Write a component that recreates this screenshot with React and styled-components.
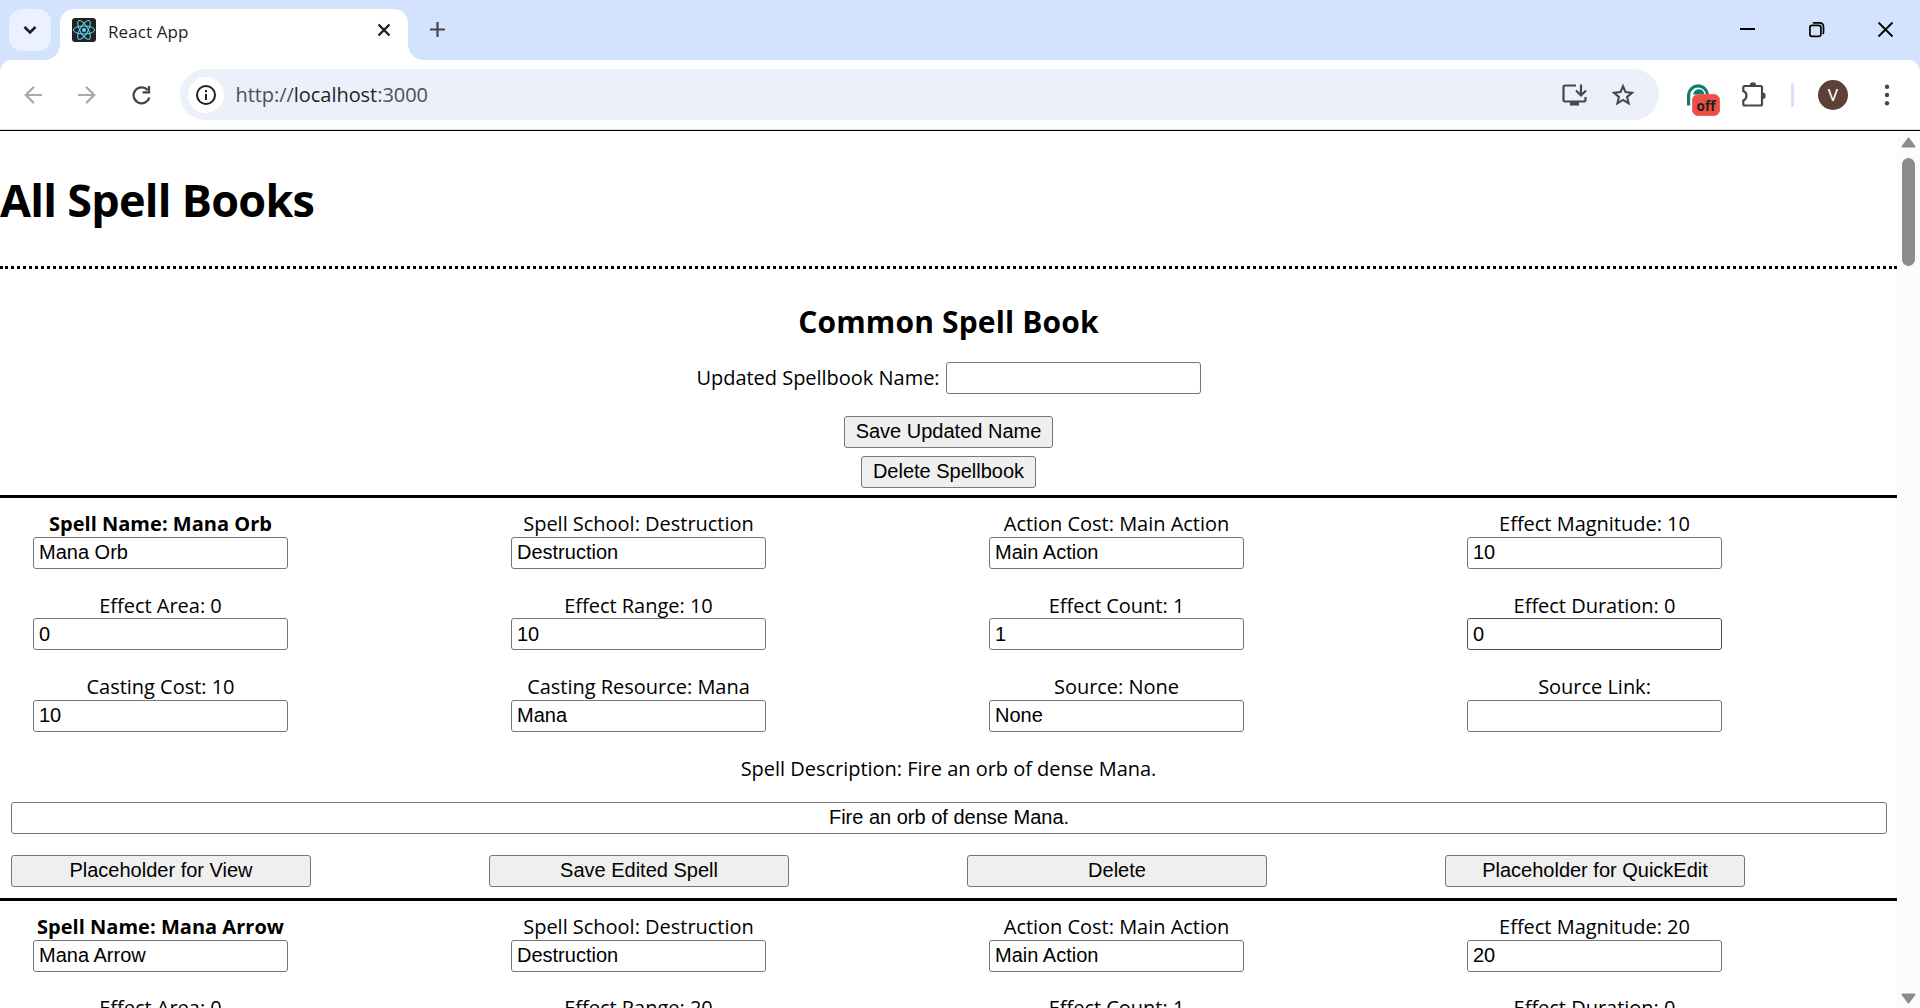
import React from "react";
import styled, { createGlobalStyle } from "styled-components";

const Global = createGlobalStyle`
  * { box-sizing: border-box; }
  html, body { margin: 0; padding: 0; overflow: hidden; background: #fff; }
  body { font-family: "Open Sans", "Noto Sans", sans-serif; color: #000; }
`;

const Window = styled.div`
  width: 1920px;
  height: 1008px;
  display: flex;
  flex-direction: column;
  overflow: hidden;
`;

const TabStrip = styled.div`
  height: 60px;
  flex: none;
  background: #d3e2fd;
  display: flex;
  align-items: flex-start;
`;

const TabSearch = styled.div`
  width: 42px;
  height: 42px;
  margin: 9px 9px 0 9px;
  border-radius: 13px;
  background: #ebf1fe;
  display: grid;
  place-items: center;
`;

const Tab = styled.div`
  position: relative;
  width: 348px;
  height: 51px;
  margin-top: 9px;
  padding: 0 17px 9px 12px;
  border-radius: 14px 14px 0 0;
  background: #fff;
  display: flex;
  align-items: center;
  &::before, &::after {
    content: "";
    position: absolute;
    bottom: 0;
    width: 15px;
    height: 15px;
  }
  &::before {
    left: -15px;
    background: radial-gradient(circle at 0 0, rgba(255, 255, 255, 0) 14.5px, #fff 15px);
  }
  &::after {
    right: -15px;
    background: radial-gradient(circle at 100% 0, rgba(255, 255, 255, 0) 14.5px, #fff 15px);
  }
`;

const TabTitle = styled.span`
  flex: 1;
  margin-left: 12px;
  padding-top: 2px;
  font-size: 17px;
  letter-spacing: 0.1px;
  color: #1f1f1f;
`;

const NewTab = styled.div`
  margin: 21px 0 0 21px;
  line-height: 0;
`;

const WindowControls = styled.div`
  margin: 21px 26px 0 auto;
  display: flex;
  gap: 52px;
  line-height: 0;
`;

const ToolbarFrame = styled.div`
  height: 69px;
  flex: none;
  background: #d3e2fd;
`;

const Toolbar = styled.div`
  height: 69px;
  background: #fff;
  border-radius: 12px 12px 0 0;
  display: flex;
  align-items: center;
  padding: 0 21px 0 22px;
  svg { flex: none; display: block; }
`;

const NavButtons = styled.div`
  display: flex;
  gap: 30px;
  width: 158px;
`;

const AddressBar = styled.div`
  width: 1479px;
  height: 51px;
  border-radius: 26px;
  background: #ecf0fa;
  display: flex;
  align-items: center;
  padding: 0 24px 0 8px;
`;

const SiteInfo = styled.div`
  width: 36px;
  height: 36px;
  border-radius: 50%;
  background: #fff;
  display: grid;
  place-items: center;
`;

const Url = styled.span`
  flex: 1;
  margin-left: 11.5px;
  font-size: 20px;
  letter-spacing: -0.05px;
  color: #4c4f55;
  b { font-weight: 400; color: #1f1f1f; }
`;

const BarActions = styled.div`
  display: flex;
  gap: 24px;
`;

const Extension = styled.div`
  position: relative;
  margin-left: 28px;
  width: 34px;
  height: 24px;
`;

const ExtensionBadge = styled.span`
  position: absolute;
  left: 5px;
  top: 11px;
  width: 28px;
  height: 22px;
  border-radius: 6px;
  border: 1px solid #f6655a;
  background: #ec5044;
  color: #1f1f1f;
  font-size: 13.5px;
  font-weight: 700;
  line-height: 22px;
  text-align: center;
`;

const Puzzle = styled.div`
  margin-left: 20px;
`;

const ToolbarRule = styled.div`
  width: 3px;
  height: 24px;
  margin-left: 24px;
  border-radius: 2px;
  background: #d3e2fd;
`;

const Avatar = styled.div`
  width: 30px;
  height: 30px;
  margin: 0 36px 0 24px;
  border-radius: 50%;
  background: #5d4037;
  color: #fff;
  font: 400 17px/31px Roboto, sans-serif;
  text-align: center;
`;

const Viewport = styled.div`
  flex: 1;
  min-height: 0;
  display: flex;
  border-top: 1px solid #dcdcdc;
`;

const Page = styled.main`
  width: 1897px;
  border-top: 1px solid #000;
  overflow: hidden;
  text-align: center;
`;

const Scrollbar = styled.div`
  width: 23px;
  border-top: 1px solid #000;
  background: #fcfcfc;
  display: flex;
  flex-direction: column;
  align-items: center;
  padding: 6px 0 4px;
  svg { display: block; }
`;

const ScrollThumb = styled.div`
  width: 13px;
  height: 108px;
  margin: 10px 0 auto;
  border-radius: 7px;
  background: #8b8b8b;
`;

const PageTitle = styled.h1`
  height: 135px;
  margin: 0;
  padding-top: 34px;
  font-size: 45px;
  line-height: 70px;
  font-weight: 700;
  letter-spacing: -0.75px;
  text-align: left;
`;

const BookHeader = styled.header`
  height: 232.4px;
  border-top: 3px dotted #000;
  border-bottom: 3px solid #000;
  display: flex;
  flex-direction: column;
  align-items: center;
`;

const BookTitle = styled.h2`
  height: 93px;
  margin: 0;
  padding-top: 32px;
  font-size: 30px;
  line-height: 42px;
  font-weight: 700;
  letter-spacing: 0.15px;
`;

const Label = styled.span`
  height: 26.6px;
  font-size: 20px;
  line-height: 27px;
  white-space: nowrap;
  font-weight: ${(p) => (p.$bold ? 700 : 400)};
  letter-spacing: ${(p) => (p.$bold ? "0.02px" : "-0.02px")};
`;

const NameRow = styled.label`
  display: flex;
  align-items: center;
  gap: 6px;
  margin-bottom: 22px;
  ${Label} { margin-bottom: 2px; }
`;

const Input = styled.input`
  display: block;
  width: ${(p) => p.$width || "255px"};
  height: 32px;
  padding: 0 5px;
  border: 1px solid ${(p) => (p.$hovered ? "#4f4f4f" : "#767676")};
  border-radius: 3px;
  background: #fff;
  color: #000;
  font: 20px "Liberation Sans", Arial, sans-serif;
  text-align: ${(p) => p.$align || "left"};
  outline: none;
`;

const Button = styled.button`
  width: ${(p) => p.$width || "100%"};
  height: 32px;
  flex: none;
  margin: 0 0 ${(p) => p.$gap || "0"};
  padding: 0 0 ${(p) => (p.$width ? "2px" : "0")};
  border: 1px solid #767676;
  border-radius: 3px;
  background: #efefef;
  color: #000;
  font: 20px "Liberation Sans", Arial, sans-serif;
`;

const Spell = styled.section`
  height: 402.6px;
  border-bottom: 3px solid #000;
  padding: 12px 11px 0;
`;

const Columns = styled.div`
  display: grid;
  grid-template-columns: repeat(4, 300px);
  column-gap: 178px;
  grid-auto-rows: ${(p) => p.$row};
`;

const Field = styled.label`
  display: flex;
  flex-direction: column;
  align-items: center;
  padding-right: 1px;
`;

const Description = styled.p`
  margin: 0;
  height: 47px;
`;

const DescriptionBox = styled.div`
  margin: 0 -1px 21px 0;
`;

const fieldNames = [
  "Spell Name", "Spell School", "Action Cost", "Effect Magnitude",
  "Effect Area", "Effect Range", "Effect Count", "Effect Duration",
  "Casting Cost", "Casting Resource", "Source", "Source Link",
];

const spells = [
  {
    values: ["Mana Orb", "Destruction", "Main Action", "10", "0", "10", "1", "0", "10", "Mana", "None", ""],
    description: "Fire an orb of dense Mana.",
    hovered: 7,
  },
  {
    values: ["Mana Arrow", "Destruction", "Main Action", "20", "0", "20", "1", "0"],
    hovered: -1,
  },
];

const actions = ["Placeholder for View", "Save Edited Spell", "Delete", "Placeholder for QuickEdit"];

function SpellCard({ spell }) {
  return (
    <Spell>
      <Columns $row="81.5px">
        {spell.values.map((value, i) => (
          <Field key={fieldNames[i]}>
            <Label $bold={i === 0}>{fieldNames[i]}: {value}</Label>
            <Input defaultValue={value} $hovered={spell.hovered === i} />
          </Field>
        ))}
      </Columns>
      {spell.description && (
        <>
          <Description><Label>Spell Description: {spell.description}</Label></Description>
          <DescriptionBox>
            <Input $width="100%" $align="center" defaultValue={spell.description} />
          </DescriptionBox>
          <Columns $row="32px">
            {actions.map((a) => <Button key={a}>{a}</Button>)}
          </Columns>
        </>
      )}
    </Spell>
  );
}

const ReactLogo = () => (
  <svg width="24" height="24" viewBox="0 0 24 24">
    <rect width="24" height="24" rx="3" fill="#222" />
    <g fill="none" stroke="#61dafb" strokeWidth="1">
      <ellipse cx="12" cy="12" rx="10.6" ry="4" />
      <ellipse cx="12" cy="12" rx="10.6" ry="4" transform="rotate(60 12 12)" />
      <ellipse cx="12" cy="12" rx="10.6" ry="4" transform="rotate(120 12 12)" />
    </g>
    <circle cx="12" cy="12" r="2" fill="#61dafb" />
  </svg>
);

function BrowserTabs() {
  return (
    <TabStrip>
      <TabSearch>
        <svg width="14" height="10" viewBox="0 0 14 10" fill="none" stroke="#1f1f1f" strokeWidth="2.6"><path d="M1.5 2 7 7.5 12.5 2" /></svg>
      </TabSearch>
      <Tab>
        <ReactLogo />
        <TabTitle>React App</TabTitle>
        <svg width="14" height="14" viewBox="0 0 14 14" stroke="#1f1f1f" strokeWidth="2.4"><path d="M1.5 1.5 12.5 12.5M12.5 1.5 1.5 12.5" /></svg>
      </Tab>
      <NewTab>
        <svg width="17" height="17" viewBox="0 0 17 17" stroke="#474747" strokeWidth="2.2"><path d="M8.500 1V16M1 8.500H16" /></svg>
      </NewTab>
      <WindowControls>
        <svg width="17" height="17" viewBox="0 0 17 17"><path d="M1 8h15" stroke="#000" strokeWidth="2" /></svg>
        <svg width="17" height="17" viewBox="0 0 17 17" fill="none" stroke="#000" strokeWidth="1.7"><rect x="1.9" y="4.4" width="11" height="11" rx="2.2" /><path d="M4.800 2.200Q5.300 1.800 6.500 1.800H11.500Q15.500 1.800 15.500 5.800V11Q15.500 12.200 14.800 12.900" /></svg>
        <svg width="17" height="17" viewBox="0 0 17 17" stroke="#000" strokeWidth="1.8"><path d="M1.500 1.500 15.500 15.500M15.500 1.500 1.500 15.500" /></svg>
      </WindowControls>
    </TabStrip>
  );
}

function BrowserToolbar() {
  return (
    <ToolbarFrame>
      <Toolbar>
        <NavButtons>
          <svg width="24" height="24" viewBox="0 0 24 24" fill="none" stroke="#a8a8a8" strokeWidth="2.2"><path d="M20 12H4M12 3.800 3.800 12 12 20.200" /></svg>
          <svg width="24" height="24" viewBox="0 0 24 24" fill="none" stroke="#a8a8a8" strokeWidth="2.2"><path d="M2 12H18M10 3.800 18.200 12 10 20.200" /></svg>
          <svg width="24" height="24" viewBox="0 0 24 24" fill="none" stroke="#474747" strokeWidth="2.3"><path d="M17.600 7A8 8 0 1 0 19.300 14.500M19 3V9.300H12.500" /></svg>
        </NavButtons>
        <AddressBar>
          <SiteInfo>
            <svg width="20" height="20" viewBox="0 0 20 20" fill="none" stroke="#1f1f1f" strokeWidth="2"><circle cx="10" cy="10" r="9" /><path d="M10 9V15M10 5V7.200" /></svg>
          </SiteInfo>
          <Url>http://<b>localhost</b>:3000</Url>
          <BarActions>
            <svg width="25" height="24" viewBox="0 0 25 24" fill="none" stroke="#474747" strokeWidth="2.2"><path d="M14 2.500H3.200Q1.500 2.500 1.500 4.200V16.800Q1.500 18.500 3.200 18.500H21.800Q23.500 18.500 23.500 16.800V14" /><path d="M19 1.500V12M14 7.500 19 12.500 24 7.500" /><path d="M8 20.800H17" strokeWidth="3.5" /></svg>
            <svg width="24" height="24" viewBox="0 0 24 24" fill="none" stroke="#474747" strokeWidth="2.1"><path d="M12 3.200 14.500 9.100 21 9.700 16.100 13.900 17.600 20.300 12 16.900 6.400 20.300 7.900 13.900 3 9.700 9.500 9.100Z" /></svg>
          </BarActions>
        </AddressBar>
        <Extension>
          <svg width="24" height="24" viewBox="0 0 24 24"><path d="M1.600 22.500V11.500A9.500 9.500 0 0 1 20.500 11.500" fill="none" stroke="#0b7f6b" strokeWidth="3.2" /><path d="M6 11.500Q7.500 6.200 12 6.200T17.500 11.500Z" fill="#0b7f6b" /></svg>
          <ExtensionBadge>off</ExtensionBadge>
        </Extension>
        <Puzzle>
          <svg width="26" height="26" viewBox="0 0 26 26"><path d="M3.800 4H19.500Q21 4 21 5.500V22Q21 23.500 19.500 23.500H3.800Q2.300 23.500 2.300 22V18.500Q5.500 17 5.500 13.700T2.300 9V5.500Q2.300 4 3.800 4Z" fill="none" stroke="#474747" strokeWidth="2.2" /><path d="M8.800 3.500A3.200 3.200 0 0 1 15.200 3.500ZM21.500 10.500A3.200 3.200 0 0 1 21.500 16.900Z" fill="#474747" /></svg>
        </Puzzle>
        <ToolbarRule />
        <Avatar>V</Avatar>
        <svg width="6" height="24" viewBox="0 0 6 24" fill="#474747"><circle cx="3" cy="3.7" r="2.2" /><circle cx="3" cy="12" r="2.2" /><circle cx="3" cy="20.3" r="2.2" /></svg>
      </Toolbar>
    </ToolbarFrame>
  );
}

export default function App() {
  return (
    <Window>
      <Global />
      <BrowserTabs />
      <BrowserToolbar />
      <Viewport>
        <Page>
          <PageTitle>All Spell Books</PageTitle>
          <BookHeader>
            <BookTitle>Common Spell Book</BookTitle>
            <NameRow><Label>Updated Spellbook Name:</Label><Input /></NameRow>
            <Button $width="209px" $gap="8px">Save Updated Name</Button>
            <Button $width="175px">Delete Spellbook</Button>
          </BookHeader>
          {spells.map((s) => <SpellCard key={s.values[0]} spell={s} />)}
        </Page>
        <Scrollbar>
          <svg width="15" height="11" viewBox="0 0 15 11"><path d="M7.500 1.500 13.500 9.500H1.500Z" fill="#8b8b8b" stroke="#8b8b8b" strokeWidth="2" strokeLinejoin="round" /></svg>
          <ScrollThumb />
          <svg width="15" height="11" viewBox="0 0 15 11"><path d="M7.500 9.500 13.500 1.500H1.500Z" fill="#8b8b8b" stroke="#8b8b8b" strokeWidth="2" strokeLinejoin="round" /></svg>
        </Scrollbar>
      </Viewport>
    </Window>
  );
}
